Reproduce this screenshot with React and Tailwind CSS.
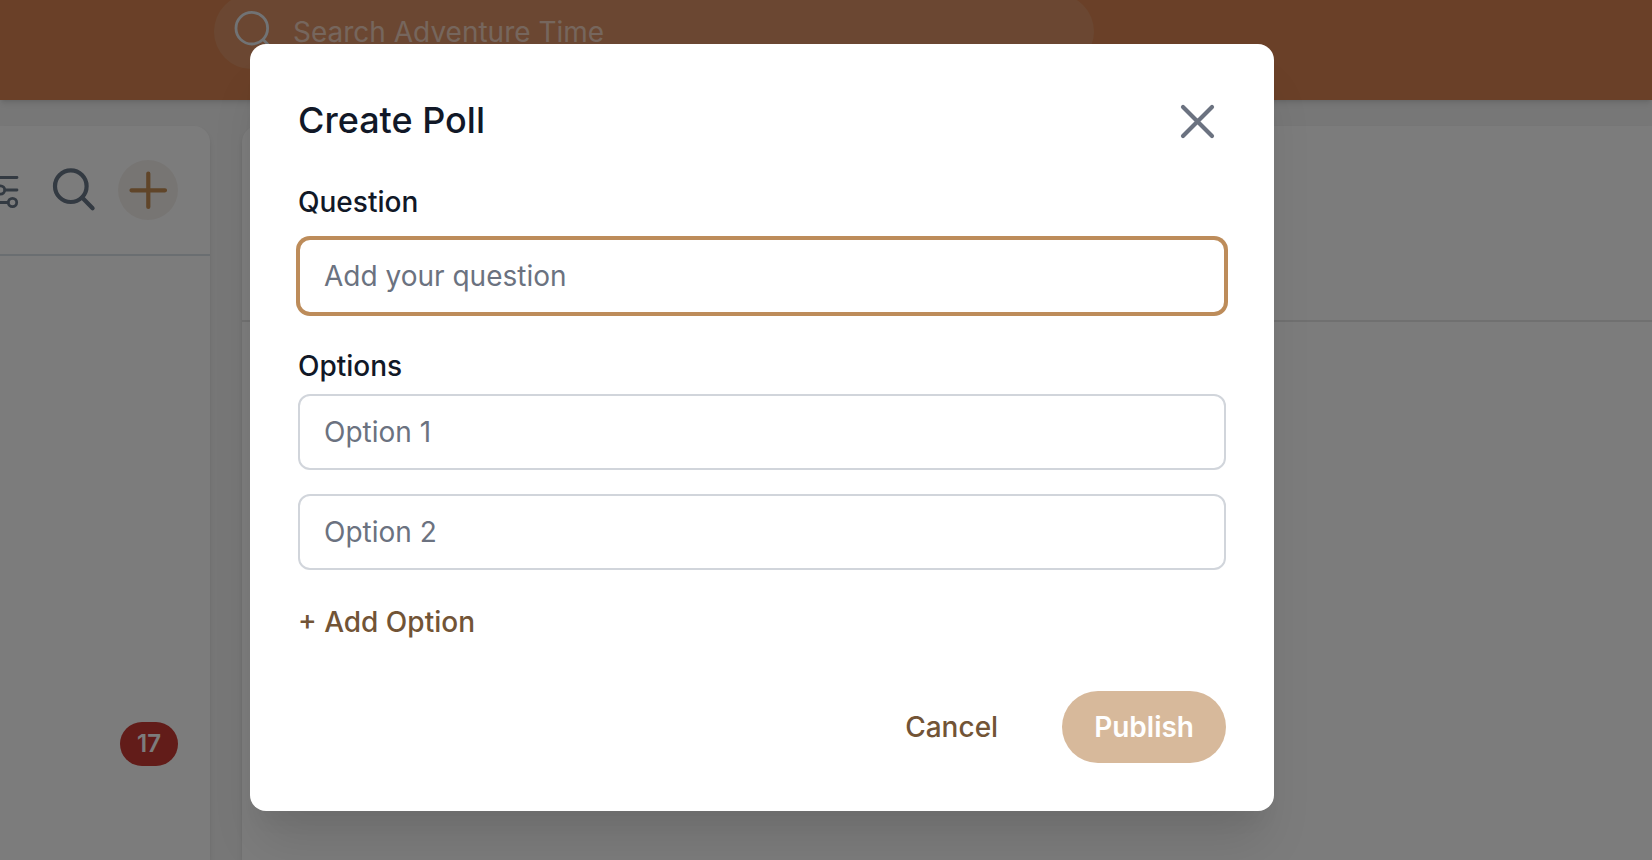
import React, { useState } from "react";

function SearchIcon({ className, strokeWidth }) {
  return (
    <svg viewBox="0 0 48 48" fill="none" stroke="currentColor" strokeWidth={strokeWidth} strokeLinecap="round" className={className} aria-hidden="true">
      <circle cx="20.8" cy="20.2" r="15.8" />
      <path d="M32.1 31.5 42.6 42.2" />
    </svg>
  );
}

function FilterIcon({ className }) {
  return (
    <svg viewBox="0 0 48 48" fill="none" stroke="currentColor" strokeWidth="2.8" strokeLinecap="round" className={className} aria-hidden="true">
      <path d="M18 11.5h25M5 11.5h4M5 24h17M31 24h12M5 36.5h29" />
      <circle cx="13.5" cy="11.5" r="4.2" />
      <circle cx="26.5" cy="24" r="4.2" />
      <circle cx="38.5" cy="36.5" r="4.2" />
    </svg>
  );
}

const fieldClass =
  "block h-[76px] w-full rounded-xl border-2 border-[#d1d5db] bg-white px-6 text-[28px] leading-10 text-gray-900 outline-none placeholder:text-[#6b7280]";
const labelClass = "block text-[28px] leading-10 font-medium text-[#111827]";

function Background() {
  return (
    <div className="col-start-1 row-start-1 flex min-w-0 flex-col overflow-hidden bg-[#eeeeee]">
      <header className="z-10 flex h-[100px] shrink-0 items-end overflow-hidden bg-[#d48050] pb-[31px] pl-[214px] shadow-md">
        <label className="flex h-[75px] w-[880px] shrink-0 items-center gap-3.5 rounded-full bg-[#d68f64] pr-8 pl-[17px] text-[#e2e6ea]">
          <SearchIcon strokeWidth="2.8" className="size-12 shrink-0" />
          <span className="sr-only">Search</span>
          <input type="search" placeholder="Search Adventure Time" className="min-w-0 flex-1 bg-transparent text-[28px] leading-10 outline-none placeholder:text-[#ecccba]" />
        </label>
      </header>
      <div className="flex flex-1 gap-8 pt-[26px]">
        <aside className="flex w-[210px] shrink-0 flex-col overflow-hidden rounded-tr-2xl bg-[#f9f9f9] shadow-md">
          <div className="flex h-[130px] items-center justify-end border-b-2 border-[#d5dde3] pr-8 text-[#677485]">
            <button type="button" aria-label="Filter"><FilterIcon className="size-12" /></button>
            <button type="button" aria-label="Search list" className="ml-7"><SearchIcon strokeWidth="4.2" className="size-12" /></button>
            <button type="button" aria-label="New" className="ml-5 flex size-[60px] shrink-0 items-center justify-center rounded-full bg-[#efebe7] text-[#c08a52]">
              <svg viewBox="0 0 48 48" fill="none" stroke="currentColor" strokeWidth="4.2" strokeLinecap="round" className="size-12" aria-hidden="true">
                <path d="M24.3 7.5v33.5M7.5 24.3h33.5" />
              </svg>
            </button>
          </div>
          <div className="flex justify-end pt-[466px] pr-8">
            <span className="flex h-11 w-[58px] items-center justify-center rounded-full bg-[#c43832] text-2xl font-semibold text-[#f9f9f9]">17</span>
          </div>
        </aside>
        <main className="min-w-0 flex-1 rounded-tl-2xl bg-[#f9f9f9] shadow-md">
          <div className="h-[196px] border-b-2 border-[#e0e0e0]" />
        </main>
      </div>
    </div>
  );
}

export default function App() {
  const [options, setOptions] = useState(["", ""]);
  return (
    <div className="grid min-h-screen font-['Inter',sans-serif]">
      <Background />
      <div className="z-20 col-start-1 row-start-1 flex items-start bg-black/50 pt-11 pl-[250px]">
        <section role="dialog" aria-modal="true" aria-labelledby="poll-title" className="w-full max-w-5xl rounded-2xl bg-white p-12 shadow-[0_40px_50px_-10px_rgba(0,0,0,0.1),0_20px_20px_-10px_rgba(0,0,0,0.04)]">
          <div className="flex h-14 items-center justify-between">
            <h2 id="poll-title" className="text-4xl font-medium text-[#111827]">Create Poll</h2>
            <button type="button" aria-label="Close" className="flex size-14 items-center justify-center text-[#6b7280]">
              <svg viewBox="0 0 56 56" fill="none" stroke="currentColor" strokeWidth="4.2" strokeLinecap="round" className="size-14" aria-hidden="true">
                <path d="M13 15 42 44M42 15 13 44" />
              </svg>
            </button>
          </div>
          <form onSubmit={(e) => e.preventDefault()}>
            <label htmlFor="question" className={labelClass + " mt-[34px] mb-4"}>Question</label>
            <input id="question" placeholder="Add your question" className="block h-[76px] w-full rounded-xl border-2 border-[#bd8c5a] bg-white px-6 text-[28px] leading-10 text-gray-900 ring-2 ring-[#bd8c5a] outline-none placeholder:text-[#6b7280]" />
            <fieldset className="mt-8">
              <legend className={labelClass + " mb-2"}>Options</legend>
              <div className="flex flex-col gap-6">
                {options.map((value, i) => (
                  <input
                    key={i}
                    aria-label={"Option " + (i + 1)}
                    placeholder={"Option " + (i + 1)}
                    value={value}
                    onChange={(e) => setOptions(options.map((o, j) => (j === i ? e.target.value : o)))}
                    className={fieldClass}
                  />
                ))}
              </div>
            </fieldset>
            <button type="button" onClick={() => setOptions([...options, ""])} className="mt-8 block text-[28px] leading-10 font-medium text-[#725436]">
              + Add Option
            </button>
            <div className="mt-[49px] flex justify-end gap-8">
              <button type="button" className="h-[72px] px-8 text-[28px] leading-10 font-medium text-[#725436]">Cancel</button>
              <button type="submit" className="h-[72px] rounded-full bg-[#d7b99b] px-8 text-[28px] leading-10 font-semibold text-white">Publish</button>
            </div>
          </form>
        </section>
      </div>
    </div>
  );
}
